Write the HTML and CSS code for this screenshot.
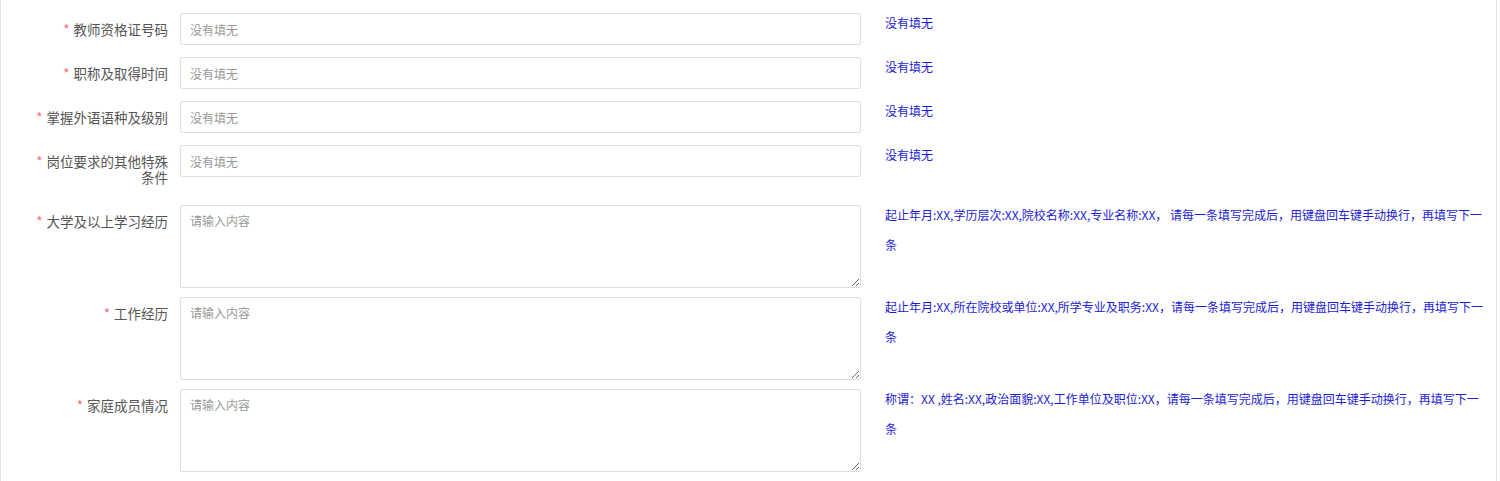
FILE: index.html
```html
<!DOCTYPE html>
<html lang="zh-CN">
<head>
    <meta charset="UTF-8">
    <title>教师信息登记</title>
    <link rel="stylesheet" href="styles.css">
</head>
<body>
    <div class="page">
        <form class="form">
            <div class="form-item">
                <label class="form-label"><span class="req">*</span>教师资格证号码</label>
                <div class="form-control">
                    <input class="input" type="text" placeholder="没有填无">
                </div>
                <div class="form-tip">没有填无</div>
            </div>
            <div class="form-item">
                <label class="form-label"><span class="req">*</span>职称及取得时间</label>
                <div class="form-control">
                    <input class="input" type="text" placeholder="没有填无">
                </div>
                <div class="form-tip">没有填无</div>
            </div>
            <div class="form-item">
                <label class="form-label"><span class="req">*</span>掌握外语语种及级别</label>
                <div class="form-control">
                    <input class="input" type="text" placeholder="没有填无">
                </div>
                <div class="form-tip">没有填无</div>
            </div>
            <div class="form-item">
                <label class="form-label"><span class="req">*</span>岗位要求的其他特殊条件</label>
                <div class="form-control">
                    <input class="input" type="text" placeholder="没有填无">
                </div>
                <div class="form-tip">没有填无</div>
            </div>
            <div class="form-item form-item-area">
                <label class="form-label"><span class="req">*</span>大学及以上学习经历</label>
                <div class="form-control">
                    <textarea class="textarea" placeholder="请输入内容"></textarea>
                </div>
                <div class="form-tip">起止年月:XX,学历层次:XX,院校名称:XX,专业名称:XX， 请每一条填写完成后，用键盘回车键手动换行，再填写下一条</div>
            </div>
            <div class="form-item form-item-area">
                <label class="form-label"><span class="req">*</span>工作经历</label>
                <div class="form-control">
                    <textarea class="textarea" placeholder="请输入内容"></textarea>
                </div>
                <div class="form-tip">起止年月:XX,所在院校或单位:XX,所学专业及职务:XX，请每一条填写完成后，用键盘回车键手动换行，再填写下一条</div>
            </div>
            <div class="form-item form-item-area">
                <label class="form-label"><span class="req">*</span>家庭成员情况</label>
                <div class="form-control">
                    <textarea class="textarea" placeholder="请输入内容"></textarea>
                </div>
                <div class="form-tip">称谓：XX ,姓名:XX,政治面貌:XX,工作单位及职位:XX，请每一条填写完成后，用键盘回车键手动换行，再填写下一条</div>
            </div>
        </form>
    </div>
</body>
</html>
```

FILE: styles.css
```css
body {
    margin: 0;
    background-color: #fff;
    font-family: "Microsoft YaHei", "Noto Sans CJK SC", sans-serif;
}
.page {
    box-sizing: border-box;
    width: 1497px;
    min-height: 481px;
    padding-top: 13px;
    border-left: 1px solid #e4e4e4;
    border-right: 1px solid #e4e4e4;
}
.form-item {
    display: flex;
    align-items: flex-start;
    margin-bottom: 12px;
}
.form-item-area {
    margin-bottom: 9px;
}
.form-label {
    box-sizing: border-box;
    flex: 0 0 179px;
    padding: 8px 12px 8px 30px;
    text-align: right;
    font-size: 13.5px;
    line-height: 16px;
    color: #555;
}
.req {
    color: #f56c6c;
    margin-right: 4px;
}
.form-control {
    flex: 0 0 681px;
}
.input,
.textarea {
    box-sizing: border-box;
    width: 100%;
    margin: 0;
    border: 1px solid #dcdfe6;
    border-radius: 2px;
    background-color: #fff;
    font-family: inherit;
    font-size: 12px;
    color: #606266;
    outline: none;
}
.input {
    display: block;
    height: 32px;
    padding: 0 9px;
}
.textarea {
    display: block;
    height: 83px;
    padding: 5px 9px;
    line-height: 20px;
    resize: vertical;
}
.input::placeholder,
.textarea::placeholder {
    color: #999;
}
.form-tip {
    width: 600px;
    margin: -5px 0 0 24px;
    font-size: 12px;
    line-height: 30px;
    color: #1c1cd4;
}
```
